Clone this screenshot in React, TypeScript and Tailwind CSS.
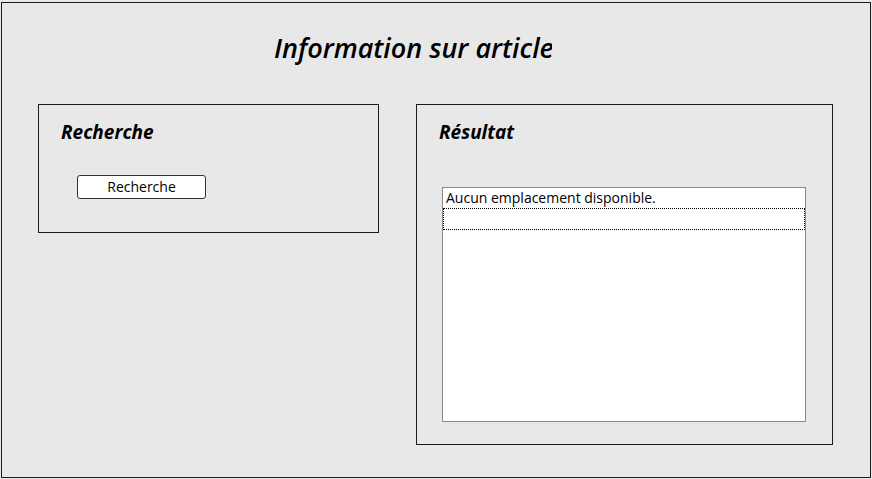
export default function App() {
  return (
    <div className="w-[872px] h-[479px] bg-[#e8e8e8] pt-[2px] pl-[1px]" style={{ fontFamily: '"Open Sans", "Noto Sans", sans-serif' }}>
      <div className="w-[870px] h-[476px] border border-[#1a1a1a] flex flex-col">
        <div className="ml-[272px] mt-[26px] w-[278px] h-[38px] overflow-hidden whitespace-nowrap text-[27px] leading-[38px] font-semibold italic text-black">
          Information sur article
        </div>

        <div className="flex items-start mt-[37px] ml-[36px] gap-[37px]">
          {/* Recherche panel */}
          <div className="w-[341px] h-[129px] border border-[#1a1a1a] flex flex-col pl-[22px] pt-[15px]">
            <div className="text-[19px] leading-[24px] font-bold italic text-black">Recherche</div>
            <button className="mt-[31px] ml-[16px] w-[129px] h-[24px] bg-white border border-[#333] rounded-[3px] text-[14px] leading-[20px] text-black">
              Recherche
            </button>
          </div>

          {/* Résultat panel */}
          <div className="w-[417px] h-[341px] border border-[#1a1a1a] flex flex-col pl-[22px] pt-[15px]">
            <div className="text-[19px] leading-[24px] font-bold italic text-black">Résultat</div>
            <div className="mt-[43px] ml-[3px] w-[364px] h-[235px] bg-white border border-[#8a8a8a] flex flex-col">
              <div className="h-[20px] pl-[3px] text-[14px] leading-[20px] text-black whitespace-nowrap">
                Aucun emplacement disponible.
              </div>
              <div className="h-[22px] border border-dotted border-black" />
            </div>
          </div>
        </div>
      </div>
    </div>
  );
}
